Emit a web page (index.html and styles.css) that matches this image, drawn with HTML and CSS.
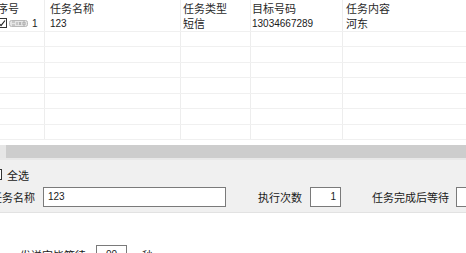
FILE: index.html
```html
<!DOCTYPE html>
<html lang="zh-CN">
<head>
  <meta charset="UTF-8">
  <title>任务列表</title>
  <link rel="stylesheet" href="styles.css">
</head>
<body>
<div class="grid">
  <div class="row head">
    <div class="cell c-no">序号</div>
    <div class="cell c-name">任务名称</div>
    <div class="cell c-type">任务类型</div>
    <div class="cell c-target">目标号码</div>
    <div class="cell c-content">任务内容</div>
  </div>
  <div class="row">
    <div class="cell c-no">
      <span class="tick">
        <svg width="8" height="8" viewBox="0 0 8 8"><path d="M1 4.5 L3 6.5 L7 1.5" fill="none" stroke="#222" stroke-width="1.2"/></svg>
      </span>
      <svg class="thumb" width="19" height="7" viewBox="0 0 19 7">
        <rect x="0.5" y="0.5" width="18" height="6" rx="2" fill="#e6e6e6" stroke="#b8b8b8"/>
        <path d="M3 2 h3 M3 5 h3 M8 2 v3 M10 2 l2 3 M12 2 l-2 3 M14 2 h2 v3 h-2 z" stroke="#9a9a9a" stroke-width="0.8" fill="none"/>
      </svg>
      <span class="num">1</span>
    </div>
    <div class="cell c-name">123</div>
    <div class="cell c-type cjk">短信</div>
    <div class="cell c-target">13034667289</div>
    <div class="cell c-content cjk">河东</div>
  </div>
  <div class="row"><div class="cell c-no"></div><div class="cell c-name"></div><div class="cell c-type"></div><div class="cell c-target"></div><div class="cell c-content"></div></div>
  <div class="row"><div class="cell c-no"></div><div class="cell c-name"></div><div class="cell c-type"></div><div class="cell c-target"></div><div class="cell c-content"></div></div>
  <div class="row"><div class="cell c-no"></div><div class="cell c-name"></div><div class="cell c-type"></div><div class="cell c-target"></div><div class="cell c-content"></div></div>
  <div class="row"><div class="cell c-no"></div><div class="cell c-name"></div><div class="cell c-type"></div><div class="cell c-target"></div><div class="cell c-content"></div></div>
  <div class="row"><div class="cell c-no"></div><div class="cell c-name"></div><div class="cell c-type"></div><div class="cell c-target"></div><div class="cell c-content"></div></div>
  <div class="row"><div class="cell c-no"></div><div class="cell c-name"></div><div class="cell c-type"></div><div class="cell c-target"></div><div class="cell c-content"></div></div>
  <div class="row"><div class="cell c-no"></div><div class="cell c-name"></div><div class="cell c-type"></div><div class="cell c-target"></div><div class="cell c-content"></div></div>
</div>
<div class="hscroll">
  <span class="arrow"></span>
  <span class="thumb-bar"></span>
</div>
<div class="panel">
  <div class="check-row">
    <span class="box"></span>
    <span class="label">全选</span>
  </div>
  <div class="field-row">
    <span class="label">任务名称</span>
    <span class="input wide">123</span>
    <span class="label gap1">执行次数</span>
    <span class="input small right">1</span>
    <span class="label gap2">任务完成后等待</span>
    <span class="input small last"></span>
  </div>
</div>
<div class="bottom">
  <div class="bottom-row">
    <span class="label">发送完毕等待</span>
    <span class="input tiny">00</span>
    <span class="label">秒</span>
  </div>
</div>
</body>
</html>
```

FILE: styles.css
```css
html, body {
  overflow: hidden;
}
body {
  margin: 0;
  width: 466px;
  height: 253px;
  background: #fff;
  font-family: "Noto Sans CJK SC", "Liberation Sans", sans-serif;
  font-size: 11px;
  color: #1a1a1a;
}
.grid {
  height: 145px;
  overflow: hidden;
  margin-left: -3px;
  background: #fff;
}
.row {
  display: flex;
  height: 14.5px;
  border-bottom: 1px solid #f0f0f0;
}
.row.head {
  height: 16px;
  border-bottom: none;
  line-height: 14px;
}
.cell {
  box-sizing: border-box;
  flex-shrink: 0;
  border-right: 1px solid #ededed;
  white-space: nowrap;
  overflow: hidden;
  display: flex;
  align-items: center;
}
.row .cell {
  font-family: "Liberation Sans", "Noto Sans CJK SC", sans-serif;
  font-size: 10px;
}
.row .cell.cjk {
  font-family: "Noto Sans CJK SC", sans-serif;
  font-size: 11px;
  color: #222;
}
.row.head .cell {
  font-family: "Noto Sans CJK SC", sans-serif;
  font-size: 11px;
  color: #2a2a2a;
  align-items: flex-start;
  padding-top: 1px;
}
.c-no { width: 48px; padding-left: 0; }
.c-name { width: 136px; padding-left: 5px; }
.c-type { width: 70px; padding-left: 2px; }
.c-target { width: 92px; padding-left: 1px; }
.c-content { flex: 1; border-right: none; padding-left: 3px; }
.tick {
  box-sizing: border-box;
  width: 10px;
  height: 10px;
  border: 1px solid #333;
  background: #fff;
  display: flex;
  align-items: center;
  justify-content: center;
}
.thumb {
  margin-left: 2px;
}
.num {
  margin-left: 4px;
}
.hscroll {
  display: flex;
  height: 13px;
  background: #cdcdcd;
}
.hscroll .arrow {
  width: 6px;
  background: #e6e6e6;
}
.hscroll .thumb-bar {
  flex: 1;
}
.panel {
  background: #f0f0f0;
  border-top: 2px solid #e8e8e8;
  border-bottom: 1px solid #e2e2e2;
  padding: 4px 0 3px;
  margin-left: -9px;
}
.label {
  flex-shrink: 0;
  white-space: nowrap;
  line-height: 14px;
  font-size: 11px;
}
.check-row {
  display: flex;
  align-items: center;
  height: 21px;
}
.check-row .box {
  box-sizing: border-box;
  width: 11px;
  height: 11px;
  border: 1px solid #333;
  background: #fff;
}
.check-row .label {
  margin-left: 5px;
}
.field-row {
  display: flex;
  align-items: center;
  height: 24px;
}
.input {
  flex-shrink: 0;
  box-sizing: border-box;
  height: 20px;
  background: #fff;
  border: 1px solid #7a7a7a;
  font-family: "Liberation Sans", sans-serif;
  font-size: 10px;
  line-height: 17px;
  padding: 0 4px;
}
.input.wide {
  width: 183px;
  margin-left: 8px;
}
.input.small {
  width: 31px;
  margin-left: 8px;
}
.input.last {
  margin-left: 7px;
}
.input.right {
  text-align: right;
}
.gap1 { margin-left: 32px; }
.gap2 { margin-left: 31px; }
.bottom {
  padding-top: 32px;
}
.bottom-row {
  display: flex;
  align-items: flex-start;
  margin-left: 20px;
}
.bottom-row .label {
  padding-top: 3px;
}
.input.tiny {
  width: 31px;
  margin: 0 15px 0 10px;
  text-align: center;
}
```
